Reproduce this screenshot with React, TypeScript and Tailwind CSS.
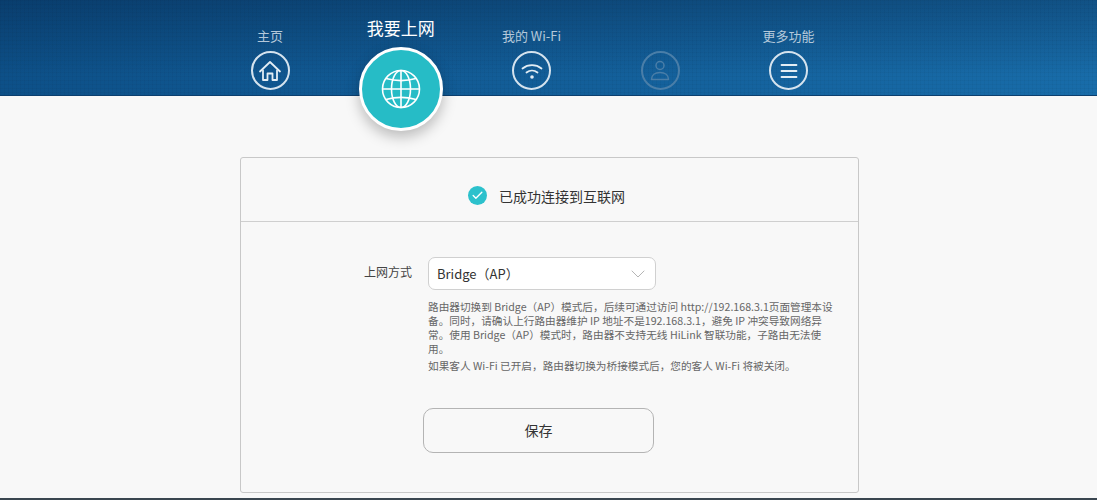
import type { ReactNode } from 'react'
import { Check, ChevronDown } from 'lucide-react'

function HomeIcon() {
  return (
    <svg viewBox="0 0 24 24" className="w-[24px] h-[24px]" fill="none" stroke="currentColor" strokeWidth="1.8" strokeLinejoin="round" strokeLinecap="round">
      <path d="M2 12.500 12 3l10 9.500" />
      <path d="M5 11.500V21h4.500v-6.500h5V21H19v-9.500" />
    </svg>
  )
}

function GlobeIcon() {
  return (
    <svg viewBox="0 0 40 40" className="w-[40px] h-[40px]" fill="none" stroke="currentColor" strokeWidth="1.6">
      <circle cx="20" cy="20" r="18.5" />
      <ellipse cx="20" cy="20" rx="9.5" ry="18.5" />
      <path d="M20 1.500v37M1.500 20h37" />
      <path d="M5 9.500c9 2.500 21 2.500 30 0M5 30.500c9-2.500 21-2.500 30 0" />
    </svg>
  )
}

function WifiIcon() {
  return (
    <svg viewBox="0 0 24 24" className="w-[24px] h-[24px]" fill="none" stroke="currentColor" strokeWidth="1.8" strokeLinecap="round">
      <path d="M2.500 9.500c5.600-4.400 13.400-4.400 19 0" />
      <path d="M6.500 13.500c3.200-2.400 7.800-2.400 11 0" />
      <circle cx="12" cy="18" r="1.8" fill="currentColor" stroke="none" />
    </svg>
  )
}

function UserIcon() {
  return (
    <svg viewBox="0 0 24 24" className="w-[24px] h-[24px]" fill="none" stroke="currentColor" strokeWidth="1.5" strokeLinejoin="round">
      <circle cx="12" cy="6.500" r="4" />
      <path d="M3.500 20.500c0-4.500 3.500-7 8.500-7s8.500 2.500 8.500 7z" />
    </svg>
  )
}

function MenuIcon() {
  return (
    <svg viewBox="0 0 24 24" className="w-[24px] h-[24px]" fill="none" stroke="currentColor" strokeWidth="1.8" strokeLinecap="round">
      <path d="M4.500 6h15M4.500 12h15M4.500 18h15" />
    </svg>
  )
}

function NavItem({ label, children, dim }: { label?: string; children: ReactNode; dim?: boolean }) {
  return (
    <div className="w-[128.5px] flex flex-col items-center">
      <div className="h-[20px] mb-[5px] text-[13px] leading-[20px] text-[#b4c8da] whitespace-nowrap">{label}</div>
      <div className={`shrink-0 w-[39px] h-[39px] rounded-full border-2 flex items-center justify-center ${dim ? 'border-[#4a7ea8] text-[#4a7ea8]' : 'border-[#d5e3ee] text-[#e3edf4]'}`}>
        {children}
      </div>
    </div>
  )
}

export default function App() {
  return (
    <div className="w-[1097px] h-[500px] overflow-hidden bg-[#f8f8f8] flex flex-col font-['Noto_Sans_CJK_SC','Noto_Sans',sans-serif]">
      {/* Top nav */}
      <header className="h-[96px] shrink-0 border-b border-[#0c3f6e] bg-[repeating-linear-gradient(to_right,rgba(0,0,0,0.03)_0_1px,transparent_1px_4px),repeating-linear-gradient(to_bottom,rgba(0,0,0,0.03)_0_1px,transparent_1px_4px),linear-gradient(to_bottom,rgba(0,20,50,0.3),rgba(0,20,50,0)_80%),linear-gradient(to_right,#0d5088,#186ca9)] flex pl-[205.75px] pt-[26px]">
        <NavItem label="主页"><HomeIcon /></NavItem>
        <div className="w-[133px] flex flex-col items-center -mt-[10px] relative z-10">
          <div className="h-[24px] mb-[7px] text-[17px] leading-[24px] text-white whitespace-nowrap">我要上网</div>
          <div className="shrink-0 w-[84px] h-[84px] rounded-full bg-[#26bcc6] border-[3px] border-white flex items-center justify-center text-white shadow-[0_6px_14px_rgba(0,0,0,0.25)]">
            <GlobeIcon />
          </div>
        </div>
        <NavItem label="我的 Wi-Fi"><WifiIcon /></NavItem>
        <NavItem dim><UserIcon /></NavItem>
        <NavItem label="更多功能"><MenuIcon /></NavItem>
      </header>

      {/* Connection card */}
      <main className="flex-1 pt-[61px] pl-[240px]">
        <div className="w-[619px] h-[336px] border border-[#c8c8c8] rounded-[3px]">
          <div className="h-[64px] border-b border-[#cfcfcf] pt-[28px] pl-[227px] flex items-start gap-[12px]">
            <div className="w-[19px] h-[19px] rounded-full bg-[#2cc1cc] flex items-center justify-center text-white">
              <Check size={13} strokeWidth={2.5} />
            </div>
            <span className="-mt-[1px] text-[14px] leading-[22px] text-[#333]">已成功连接到互联网</span>
          </div>

          <div className="flex pt-[35px]">
            <div className="w-[171px] shrink-0 pt-[5px] text-right text-[12px] leading-[20px] text-[#444]">上网方式</div>
            <div className="ml-[16px] w-[412px]">
              <div className="w-[228px] h-[33px] rounded-[7px] border border-[#d0d0d0] bg-white flex items-center justify-between pl-[8px] pr-[5px] text-[13px] text-[#333]">
                <span>Bridge（AP）</span>
                <ChevronDown size={24} strokeWidth={1} className="text-[#b5b5b5]" />
              </div>
              <div className="mt-[10px] text-[10.65px] leading-[14px] text-[#666] whitespace-nowrap">
                <p>
                  路由器切换到 Bridge（AP）模式后，后续可通过访问 http://192.168.3.1页面管理本设<br />
                  备。同时，请确认上行路由器维护 IP 地址不是192.168.3.1，避免 IP 冲突导致网络异<br />
                  常。使用 Bridge（AP）模式时，路由器不支持无线 HiLink 智联功能，子路由无法使<br />
                  用。
                </p>
                <p className="mt-[3px]">如果客人 Wi-Fi 已开启，路由器切换为桥接模式后，您的客人 Wi-Fi 将被关闭。</p>
              </div>
            </div>
          </div>

          <div className="pl-[182px] pt-[35px]">
            <button type="button" className="w-[231px] h-[45px] rounded-[10px] border border-[#b4b4b4] text-[14px] text-[#333]">保存</button>
          </div>
        </div>
      </main>

      <div className="h-[2px] shrink-0 bg-[#3a4650]" />
    </div>
  )
}
